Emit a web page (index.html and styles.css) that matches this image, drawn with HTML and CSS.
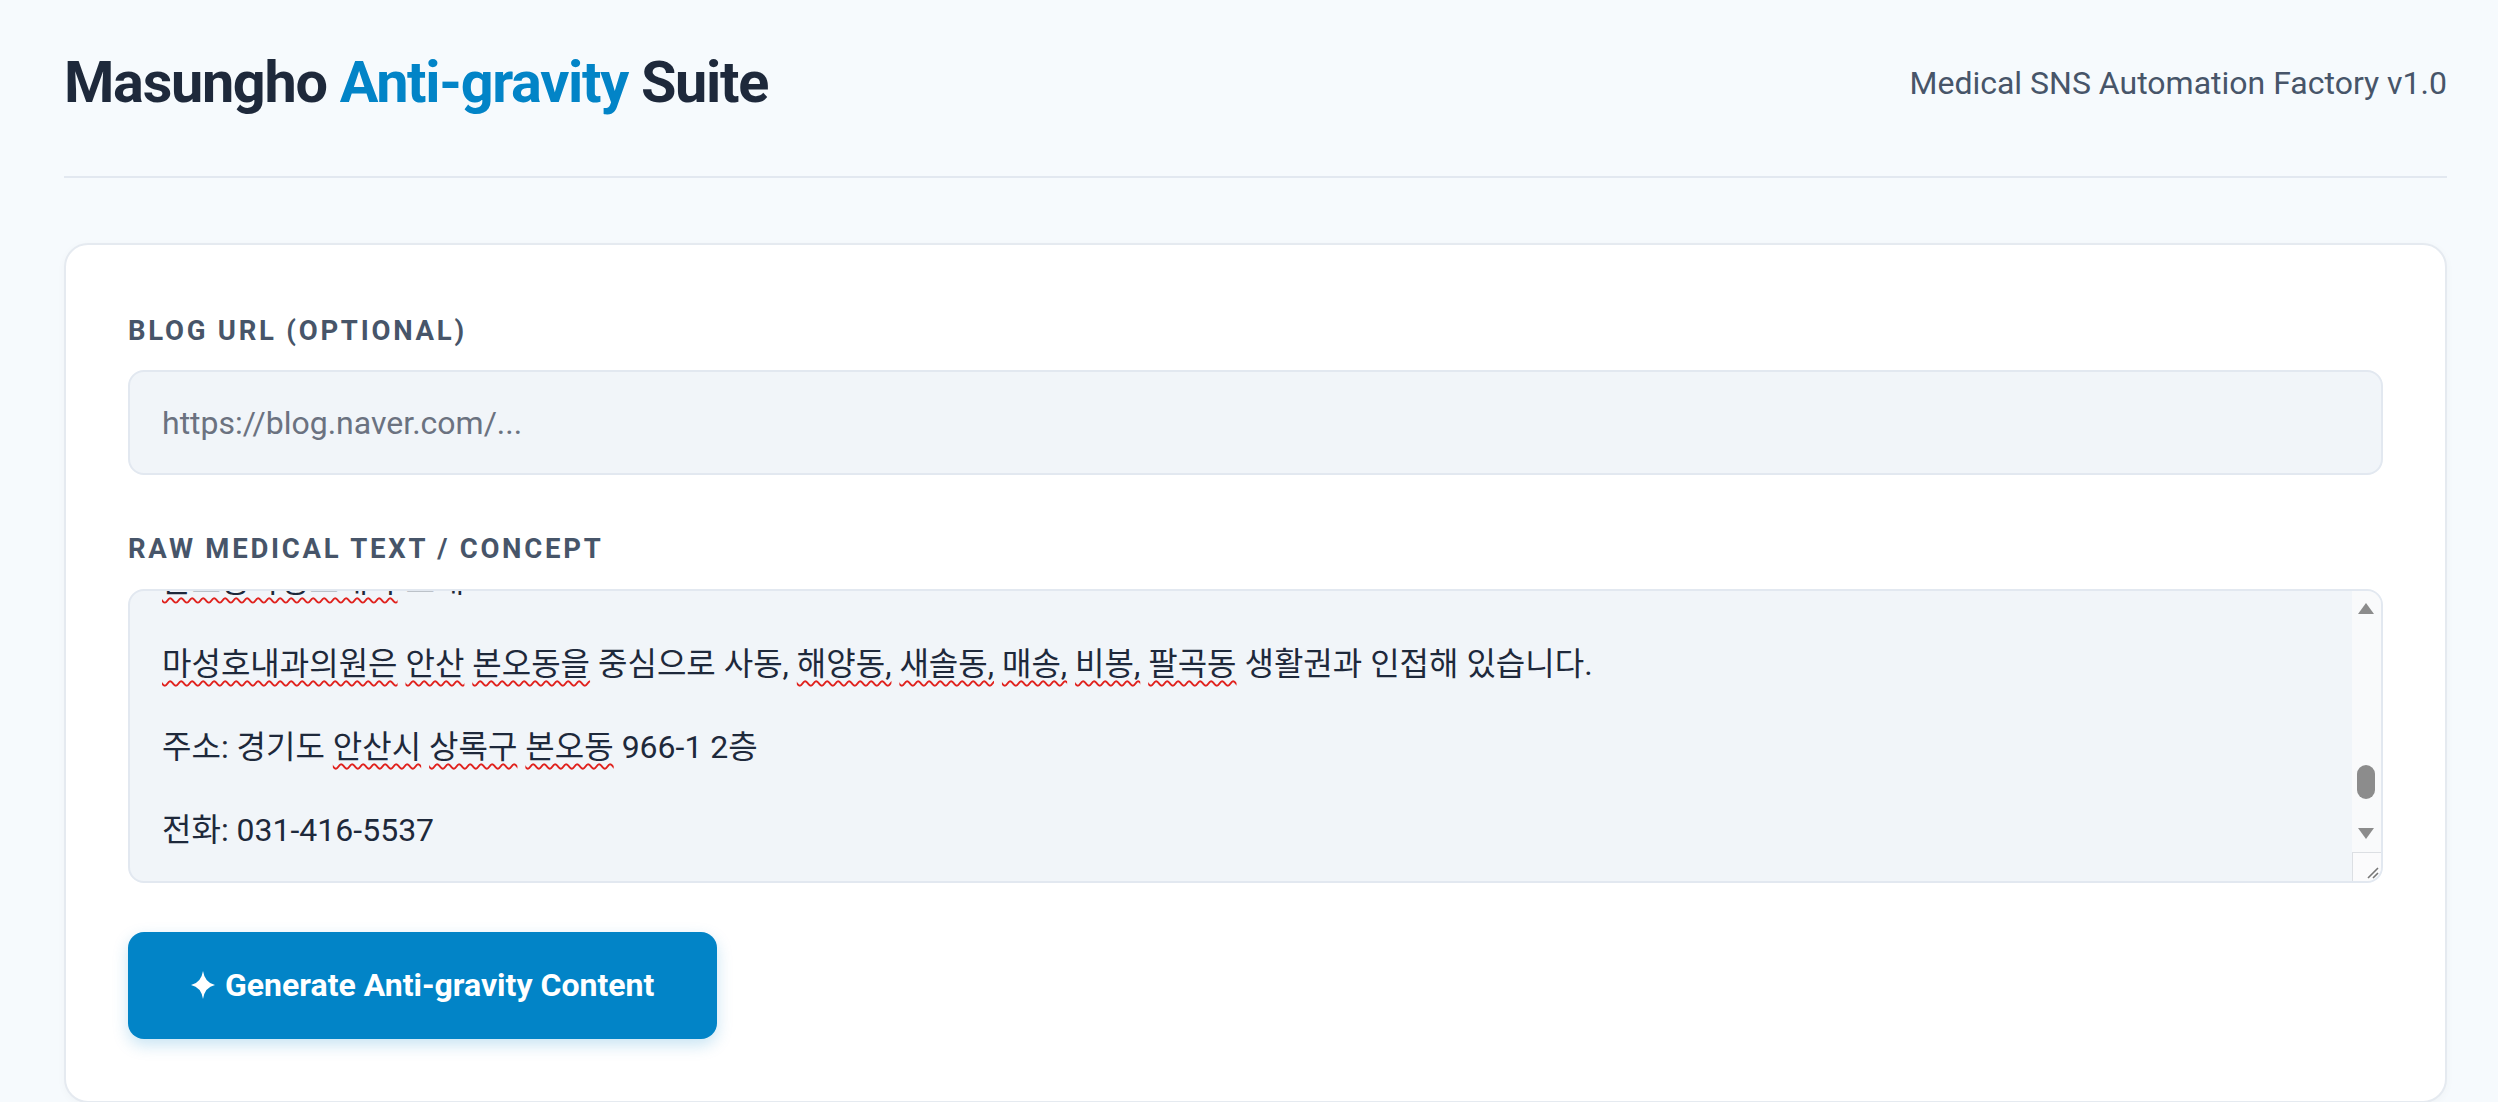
FILE: index.html
```html
<!DOCTYPE html>
<html lang="ko">
<head>
    <meta charset="utf-8">
    <title>Masungho Anti-gravity Suite</title>
    <link rel="stylesheet" href="styles.css">
</head>
<body>

<div class="page">
    <header class="top">
        <h1 class="brand">Masungho <span>Anti-gravity</span> Suite</h1>
        <div class="tagline">Medical SNS Automation Factory v1.0</div>
    </header>

    <!-- input form -->
    <form class="card" name="genform" action="" onsubmit="return false;">
        <label class="field-label" for="blogUrl">Blog URL (Optional)</label>
        <input type="text" id="blogUrl" class="url-input" placeholder="https://blog.naver.com/...">

        <label class="field-label" for="rawText">Raw Medical Text / Concept</label>
        <div class="ta-wrap">
            <!-- editable text box, shown scrolled down to the clinic info -->
            <div id="rawText" class="raw-text" contenteditable="true" spellcheck="false" role="textbox" aria-multiline="true">
                <div class="raw-lines">
                    <div class="ln"><span class="typo">본오동마성호내과</span> 소개</div>
                    <div class="ln"></div>
                    <div class="ln"><span class="typo">마성호내과의원은</span> <span class="typo">안산</span> <span class="typo">본오동을</span> 중심으로 사동, <span class="typo">해양동,</span> <span class="typo">새솔동,</span> <span class="typo">매송,</span> <span class="typo">비봉,</span> <span class="typo">팔곡동</span> 생활권과 인접해 있습니다.</div>
                    <div class="ln"></div>
                    <div class="ln">주소: 경기도 <span class="typo">안산시</span> <span class="typo">상록구</span> <span class="typo">본오동</span> 966-1 2층</div>
                    <div class="ln"></div>
                    <div class="ln">전화: 031-416-5537</div>
                </div>
            </div>
            <!-- scrollbar drawn over the box edge -->
            <div class="sbar">
                <span class="sbar-up"></span>
                <span class="sbar-thumb"></span>
                <span class="sbar-down"></span>
            </div>
            <div class="sbar-corner">
                <svg viewBox="0 0 29 29" width="29" height="29"><path d="M26 16 L16 26 M26 21 L21 26" stroke="#777" stroke-width="1.6" fill="none"/></svg>
            </div>
        </div>

        <button type="submit" class="gen-btn">
            <svg class="spark" viewBox="0 0 24 28" width="24" height="28"><path d="M12 0 Q13.8 11.8 24 14 Q13.8 16.2 12 28 Q10.2 16.2 0 14 Q10.2 11.8 12 0 Z" fill="#fff"/></svg>
            Generate Anti-gravity Content
        </button>
    </form>
</div>

</body>
</html>
```

FILE: styles.css
```css
/* base */
html, body {
    height: 100%;
}
body {
    margin: 0;
    overflow: hidden;
    background-color: #f6fafd;
    font-family: Roboto, "Noto Sans CJK KR", sans-serif;
    color: #1e293b;
}

.page {
    padding: 0 51px 0 64px;
}

/* header */
.top {
    display: flex;
    justify-content: space-between;
    align-items: center;
    padding: 49px 0 59px 0;
    border-bottom: 2px solid #e2e8f0;
}
.brand {
    margin: 0;
    font-size: 57.6px;
    line-height: 67.5px;
    font-weight: 700;
    letter-spacing: -1.3px;
    color: #1e293b;
}
.brand span {
    color: #0284c7;
}
.tagline {
    font-size: 32px;
    color: #475569;
}

/* card */
.card {
    margin-top: 65px;
    background-color: #fff;
    border: 2px solid #e5eaf0;
    border-radius: 24px;
    padding: 70px 62px 62px 62px;
    box-shadow: 0 2px 8px rgba(15, 23, 42, 0.03);
}

.field-label {
    display: block;
    font-size: 27.5px;
    line-height: 31.6px;
    font-weight: 700;
    letter-spacing: 2.75px;
    text-transform: uppercase;
    color: #475569;
    margin-bottom: 24px;
}

.url-input,
.raw-text {
    display: block;
    width: 100%;
    box-sizing: border-box;
    background-color: #f1f5f9;
    border: 2px solid #e2e8f0;
    border-radius: 16px;
    font-family: inherit;
    font-size: 32px;
    color: #1e293b;
    outline: none;
}
.url-input {
    height: 105px;
    padding: 0 32px;
    margin-bottom: 58px;
}
.url-input::placeholder {
    color: #6b7280;
}

.ta-wrap {
    position: relative;
    margin-bottom: 49px;
}
.raw-text {
    height: 294px;
    padding: 0 32px;
    line-height: 1.3;
    overflow: hidden;
}
.raw-lines {
    margin-top: -30px;
}
.ln {
    height: 41.6px;
    white-space: pre;
}
.typo {
    text-decoration: underline wavy #e0211d;
    text-decoration-thickness: 2px;
    text-underline-offset: 5px;
    text-decoration-skip-ink: none;
}

/* fake scrollbar */
.sbar {
    position: absolute;
    top: 2px;
    right: 2px;
    width: 29px;
    height: 261px;
    background-color: #f9fafb;
    border-top-right-radius: 14px;
}
.sbar-up,
.sbar-down {
    position: absolute;
    left: 6px;
    width: 0;
    height: 0;
    border-left: 8px solid transparent;
    border-right: 8px solid transparent;
}
.sbar-up {
    top: 12px;
    border-bottom: 11px solid #8c8c8c;
}
.sbar-down {
    top: 237px;
    border-top: 11px solid #8c8c8c;
}
.sbar-thumb {
    position: absolute;
    top: 174px;
    left: 5px;
    width: 18px;
    height: 34px;
    border-radius: 9px;
    background-color: #8c8c8c;
}
.sbar-corner {
    position: absolute;
    right: 2px;
    bottom: 2px;
    width: 28px;
    height: 28px;
    background-color: #fbfbfc;
    border-top: 1px solid #dcdfe3;
    border-left: 1px solid #dcdfe3;
    border-bottom-right-radius: 14px;
    overflow: hidden;
}
.sbar-corner svg {
    display: block;
    margin: -1px 0 0 -1px;
}

/* button */
.gen-btn {
    display: flex;
    align-items: center;
    gap: 10px;
    height: 107px;
    padding: 0 63px;
    border: none;
    border-radius: 16px;
    background-color: #0284c7;
    color: #fff;
    font-family: inherit;
    font-size: 32px;
    font-weight: 700;
    box-shadow: 0 6px 16px rgba(2, 132, 199, 0.22);
    cursor: pointer;
}
.spark {
    display: block;
}
```
